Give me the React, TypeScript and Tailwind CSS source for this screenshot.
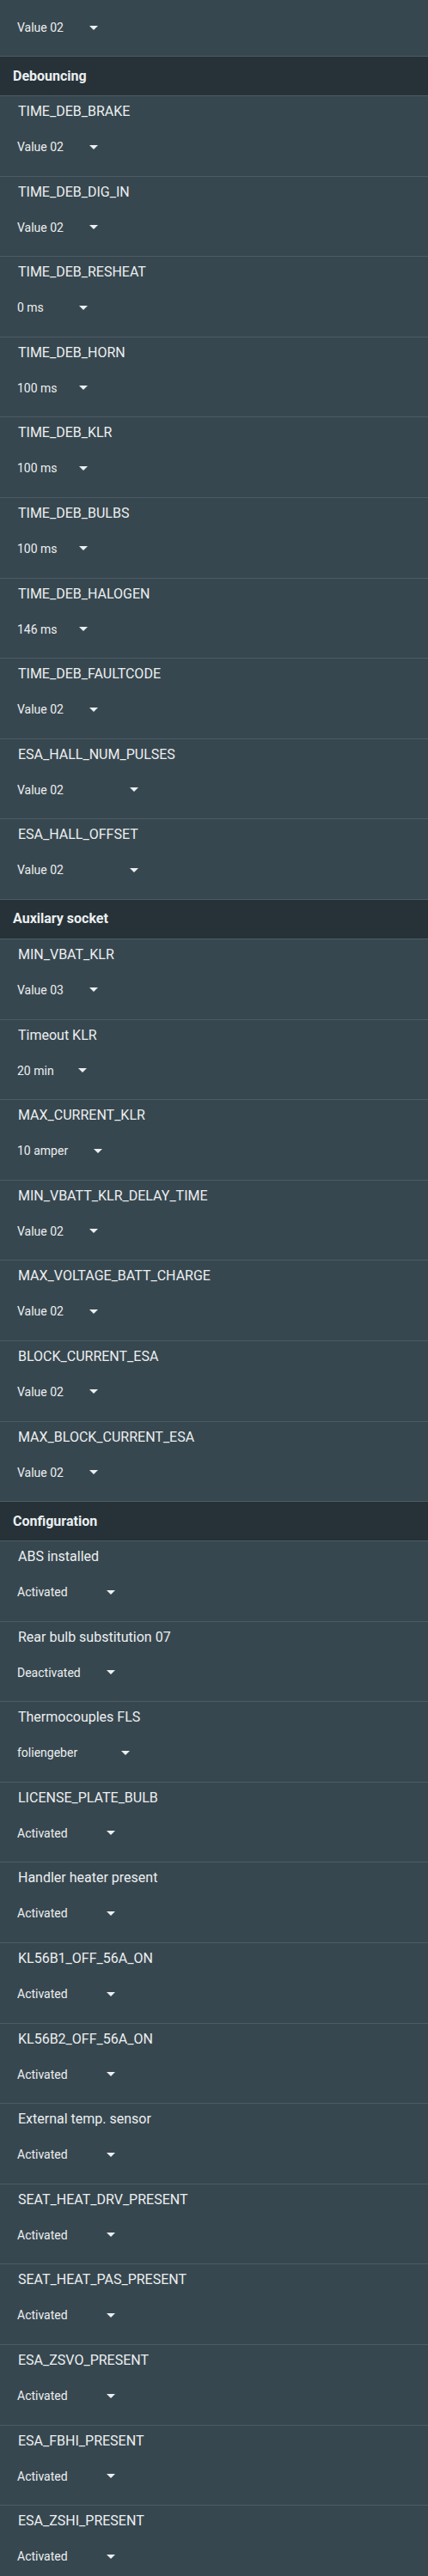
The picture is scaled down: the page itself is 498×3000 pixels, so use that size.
type Row = { label: string; value: string; w: string };
type Section = { title: string; rows: Row[] };

// w = width of the select text box; the dropdown arrow sits right after it
const sections: Section[] = [
  {
    title: 'Debouncing',
    rows: [
      { label: 'TIME_DEB_BRAKE', value: 'Value 02', w: 'w-[84px]' },
      { label: 'TIME_DEB_DIG_IN', value: 'Value 02', w: 'w-[84px]' },
      { label: 'TIME_DEB_RESHEAT', value: '0 ms', w: 'w-[72px]' },
      { label: 'TIME_DEB_HORN', value: '100 ms', w: 'w-[72px]' },
      { label: 'TIME_DEB_KLR', value: '100 ms', w: 'w-[72px]' },
      { label: 'TIME_DEB_BULBS', value: '100 ms', w: 'w-[72px]' },
      { label: 'TIME_DEB_HALOGEN', value: '146 ms', w: 'w-[72px]' },
      { label: 'TIME_DEB_FAULTCODE', value: 'Value 02', w: 'w-[84px]' },
      { label: 'ESA_HALL_NUM_PULSES', value: 'Value 02', w: 'w-[131px]' },
      { label: 'ESA_HALL_OFFSET', value: 'Value 02', w: 'w-[131px]' },
    ],
  },
  {
    title: 'Auxilary socket',
    rows: [
      { label: 'MIN_VBAT_KLR', value: 'Value 03', w: 'w-[84px]' },
      { label: 'Timeout KLR', value: '20 min', w: 'w-[71px]' },
      { label: 'MAX_CURRENT_KLR', value: '10 amper', w: 'w-[89px]' },
      { label: 'MIN_VBATT_KLR_DELAY_TIME', value: 'Value 02', w: 'w-[84px]' },
      { label: 'MAX_VOLTAGE_BATT_CHARGE', value: 'Value 02', w: 'w-[84px]' },
      { label: 'BLOCK_CURRENT_ESA', value: 'Value 02', w: 'w-[84px]' },
      { label: 'MAX_BLOCK_CURRENT_ESA', value: 'Value 02', w: 'w-[84px]' },
    ],
  },
  {
    title: 'Configuration',
    rows: [
      { label: 'ABS installed', value: 'Activated', w: 'w-[104px]' },
      { label: 'Rear bulb substitution 07', value: 'Deactivated', w: 'w-[104px]' },
      { label: 'Thermocouples FLS', value: 'foliengeber', w: 'w-[121px]' },
      { label: 'LICENSE_PLATE_BULB', value: 'Activated', w: 'w-[104px]' },
      { label: 'Handler heater present', value: 'Activated', w: 'w-[104px]' },
      { label: 'KL56B1_OFF_56A_ON', value: 'Activated', w: 'w-[104px]' },
      { label: 'KL56B2_OFF_56A_ON', value: 'Activated', w: 'w-[104px]' },
      { label: 'External temp. sensor', value: 'Activated', w: 'w-[104px]' },
      { label: 'SEAT_HEAT_DRV_PRESENT', value: 'Activated', w: 'w-[104px]' },
      { label: 'SEAT_HEAT_PAS_PRESENT', value: 'Activated', w: 'w-[104px]' },
      { label: 'ESA_ZSVO_PRESENT', value: 'Activated', w: 'w-[104px]' },
      { label: 'ESA_FBHI_PRESENT', value: 'Activated', w: 'w-[104px]' },
      { label: 'ESA_ZSHI_PRESENT', value: 'Activated', w: 'w-[104px]' },
    ],
  },
];

function Select({ value, w }: { value: string; w: string }) {
  return (
    <div className="flex h-5 items-center pl-5">
      <span className={`${w} text-[14px] leading-5 text-[#eceff1]`}>{value}</span>
      <svg width="10" height="5" viewBox="0 0 10 5" className="shrink-0">
        <path d="M0 0L5 5L10 0Z" fill="#eceff1" />
      </svg>
    </div>
  );
}

function SettingRow({ row }: { row: Row }) {
  return (
    <div className="h-[93.6px] border-b border-[#4d5b64] pt-[6px]">
      <div className="h-6 pl-[21px] text-[16px] leading-6 text-[#eceff1]">{row.label}</div>
      <div className="mt-[19px]">
        <Select value={row.value} w={row.w} />
      </div>
    </div>
  );
}

export default function App() {
  return (
    <div
      className="min-h-screen w-full bg-[#37474f]"
      style={{ fontFamily: 'Roboto, "Noto Sans", sans-serif' }}
    >
      {/* tail of the row scrolled off above */}
      <div className="h-[66px] border-b border-[#4d5b64] pt-[22px]">
        <Select value="Value 02" w="w-[84px]" />
      </div>
      {sections.map((s) => (
        <div key={s.title}>
          <div className="flex h-[46px] items-center border-b border-[#4d5b64] bg-[#263238] pl-[15px] text-[16px] font-bold text-[#eceff1]">
            {s.title}
          </div>
          {s.rows.map((r) => (
            <SettingRow key={r.label} row={r} />
          ))}
        </div>
      ))}
    </div>
  );
}
